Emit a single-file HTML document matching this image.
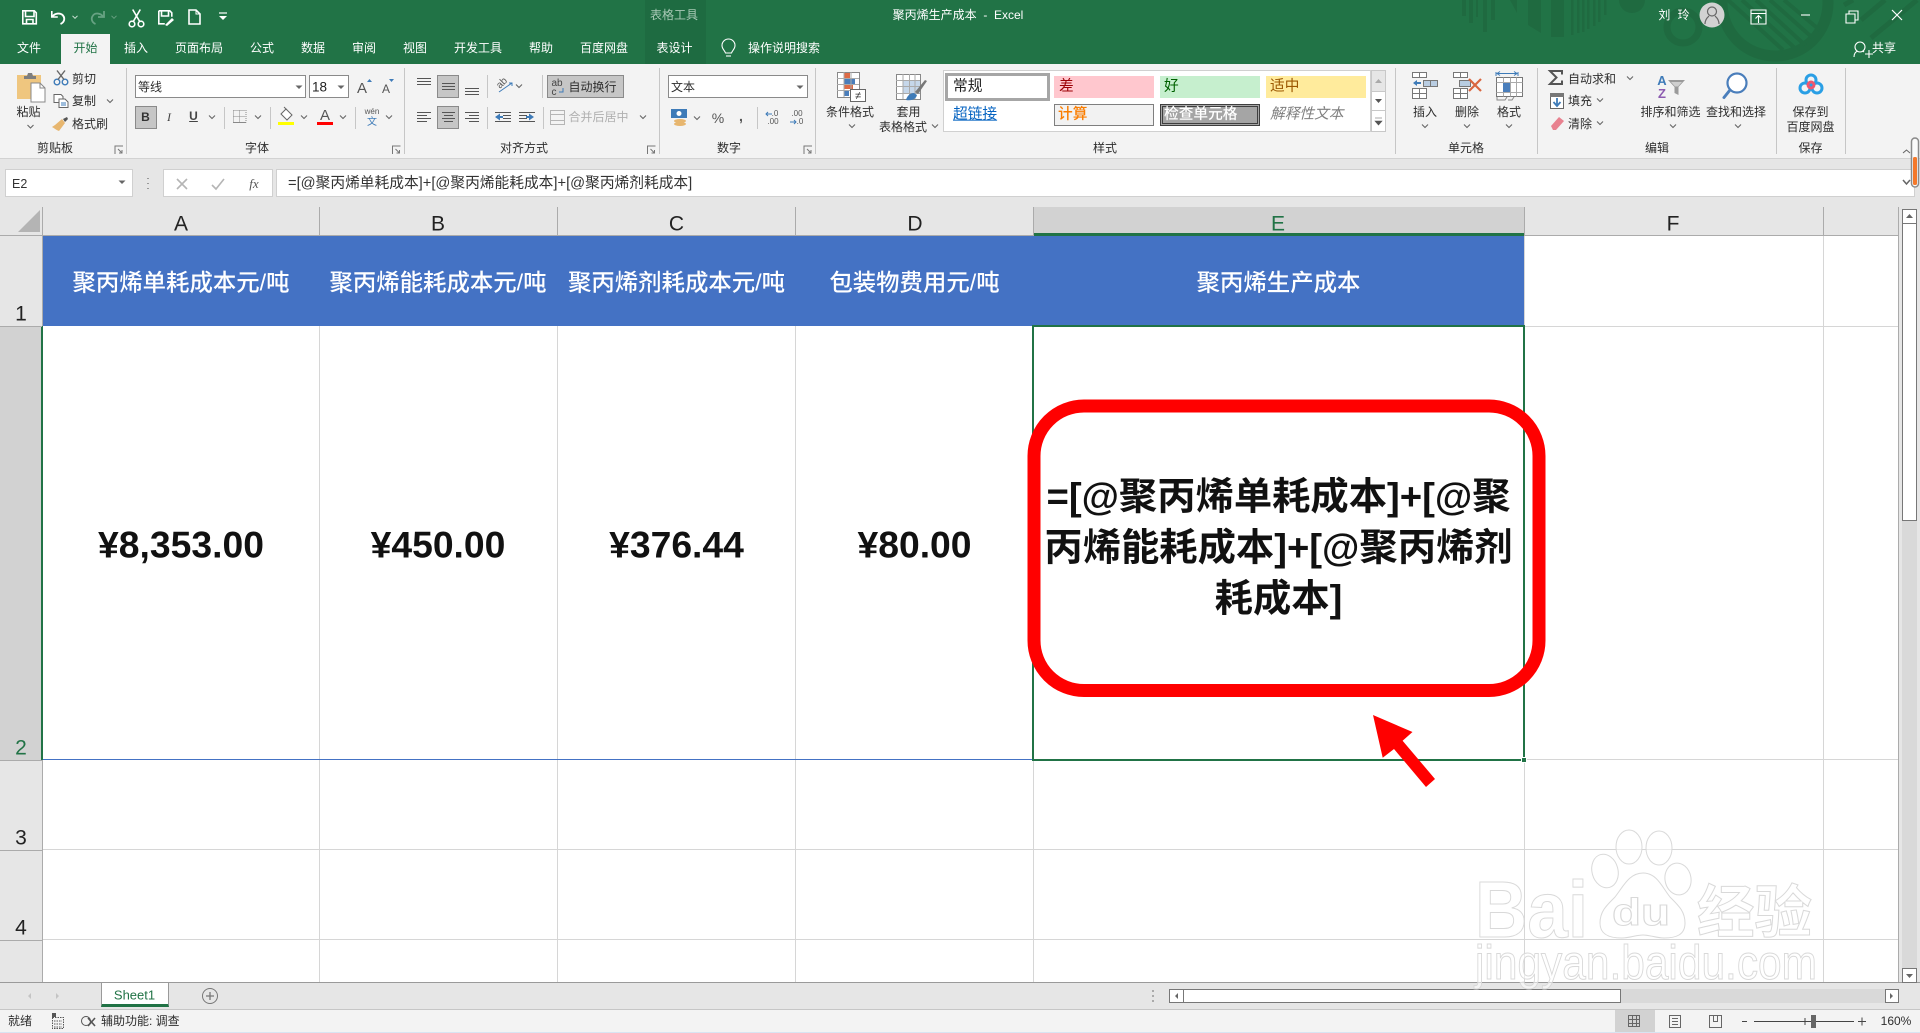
<!DOCTYPE html>
<html lang="zh"><head><meta charset="utf-8"><title>聚丙烯生产成本 - Excel</title>
<style>
html,body{margin:0;padding:0;width:1920px;height:1033px;overflow:hidden;background:#fff}
body{position:relative;font-family:"Liberation Sans","Noto Sans CJK SC",sans-serif;color:#2e2e2e}
.b{position:absolute;box-sizing:border-box}
.c,.l{position:absolute;white-space:nowrap;line-height:1}
.c{transform:translate(-50%,-50%)}
.l{transform:translateY(-50%)}
.r{font-size:12px}
.w{color:#fff;font-size:12px}
.h{font-size:21px;color:#222}
.th{font-size:23.4px;color:#fff;font-weight:500;top:283px}
.v{font-size:37.3px;font-weight:700;color:#111;top:545px}
.g{font-size:14.7px}
svg{position:absolute;left:0;top:0}
</style></head><body>

<!-- title bar + tabs -->
<div class="b" style="left:0;top:0;width:1920px;height:64px;background:#217346"></div>
<div class="b" style="left:645px;top:0;width:61px;height:64px;background:#1e6b41"></div>
<!-- title pattern -->
<svg width="1920" height="64" viewBox="0 0 1920 64">
<defs><clipPath id="bigc"><circle cx="1775" cy="3" r="52"/></clipPath></defs>
<g fill="#1f6a40">
<path d="M1462 0h4v16h-4zM1469 0h4v23h-4zM1476 0h2v17h-2zM1483 0h4v32h-4zM1491 0h4v20h-4z"/>
<path d="M1510 0h7v13zM1528 0h13v33l-13-8zM1551 0h13v37h-13z"/>
<path d="M1571 0h2.500v35h-2.500zM1577 0h2.500v33h-2.500zM1582 0h2.500v32h-2.500zM1587 0h2.500v29h-2.500zM1593 0h2.500v26h-2.500zM1598 0h2.500v22h-2.500zM1604 0h2.500v15h-2.500z"/>
<circle cx="1632" cy="0" r="13"/>
</g>
<g fill="none" stroke="#1f6a40">
<circle cx="1683" cy="27" r="16" stroke-width="7"/>
<circle cx="1775" cy="3" r="53" stroke-width="11"/>
<g clip-path="url(#bigc)" stroke-width="4">
<path d="M1728 0l55 50M1742 0l55 50M1756 0l50 46M1770 0l45 40M1784 0l38 32"/>
</g>
<path d="M1844 5l9-5M1861 20l24-20M1871 38l46-38" stroke-width="5"/>
</g>
</svg>
<div class="b" style="left:61px;top:34px;width:49px;height:30px;background:#f3f3f3"></div>
<!-- ribbon -->
<div class="b" style="left:0;top:64px;width:1920px;height:95px;background:#f3f3f3;border-bottom:1px solid #d2d2d2"></div>
<!-- formula area -->
<div class="b" style="left:0;top:159px;width:1920px;height:48px;background:#e6e6e6"></div>
<div class="b" style="left:5px;top:169px;width:128px;height:28px;background:#fff;border:1px solid #d0d0d0"></div>
<div class="b" style="left:163px;top:169px;width:110px;height:28px;background:#fff;border:1px solid #d0d0d0"></div>
<div class="b" style="left:276px;top:169px;width:1639px;height:28px;background:#fff;border:1px solid #d0d0d0"></div>

<!-- grid headers -->
<div class="b" style="left:0;top:207px;width:1899px;height:29px;background:#e6e6e6;border-bottom:1px solid #ababab"></div>
<div class="b" style="left:1033px;top:207px;width:491px;height:29px;background:#d2d2d2;border-bottom:3px solid #217346"></div>
<div class="b" style="left:0;top:236px;width:43px;height:747px;background:#e6e6e6;border-right:1px solid #ababab"></div>
<div class="b" style="left:0;top:326px;width:43px;height:434px;background:#d2d2d2;border-right:2px solid #217346"></div>

<!-- grid lines -->
<div class="b" style="left:43px;top:236px;width:1855px;height:747px;background:#fff"></div>
<svg width="1920" height="1033" viewBox="0 0 1920 1033">
<g stroke="#d6d6d6" stroke-width="1" fill="none" shape-rendering="crispEdges">
<path d="M319.5 326V983M557.5 326V983M795.5 326V983M1033.5 326V983M1524.5 236V983M1823.5 236V983"/>
<path d="M1524 326.5H1898M43 849.5H1898M43 939.5H1898M1524 759.5H1898"/>
</g>
<g stroke="#ababab" stroke-width="1" fill="none" shape-rendering="crispEdges">
<path d="M42.5 207V236M319.5 207V236M557.5 207V236M795.5 207V236M1033.5 207V236M1524.5 207V236M1823.5 207V236M0 326.5H42M0 760.5H42M0 850.5H42M0 940.5H42M1898.5 207V983"/>
</g>
<path d="M40 210V232H18z" fill="#b4b4b4"/>
</svg>
<div class="b" style="left:43px;top:236px;width:1481px;height:90px;background:#4472c4"></div>
<div class="b" style="left:43px;top:759px;width:990px;height:1px;background:#4472c4"></div>

<div class="c h" style="left:181px;top:224px">A</div>
<div class="c h" style="left:438px;top:224px">B</div>
<div class="c h" style="left:676.500px;top:224px">C</div>
<div class="c h" style="left:915px;top:224px">D</div>
<div class="c h" style="left:1278px;top:224px;color:#217346">E</div>
<div class="c h" style="left:1673px;top:224px">F</div>
<div class="c h" style="left:21px;top:314px">1</div>
<div class="c h" style="left:21px;top:748px;color:#217346">2</div>
<div class="c h" style="left:21px;top:838px">3</div>
<div class="c h" style="left:21px;top:928px">4</div>

<div class="c th" style="left:181px">聚丙烯单耗成本元/吨</div>
<div class="c th" style="left:438px">聚丙烯能耗成本元/吨</div>
<div class="c th" style="left:676.5px">聚丙烯剂耗成本元/吨</div>
<div class="c th" style="left:914.5px">包装物费用元/吨</div>
<div class="c th" style="left:1278.5px">聚丙烯生产成本</div>

<div class="c v" style="left:181px">¥8,353.00</div>
<div class="c v" style="left:438px">¥450.00</div>
<div class="c v" style="left:676.5px">¥376.44</div>
<div class="c v" style="left:914.5px">¥80.00</div>
<div class="c" style="left:1278.5px;top:547.500px;font-size:38.3px;font-weight:700;color:#111;text-align:center;line-height:51px">=[@聚丙烯单耗成本]+[@聚<br>丙烯能耗成本]+[@聚丙烯剂<br>耗成本]</div>

<!-- selection -->
<div class="b" style="left:1032px;top:325px;width:493px;height:436px;border:2px solid #217346"></div>
<div class="b" style="left:1521px;top:757px;width:6px;height:6px;background:#217346;border:1px solid #fff"></div>

<!-- sheet bar -->
<div class="b" style="left:0;top:982px;width:1920px;height:28px;background:#e6e6e6;border-top:1px solid #9a9a9a;border-bottom:1px solid #c6c6c6"></div>
<div class="b" style="left:101px;top:982px;width:68px;height:25px;background:#fff;border:1px solid #9a9a9a;border-top:1px solid #9a9a9a;border-bottom:3px solid #217346"></div>
<div class="c" style="left:134.5px;top:995px;font-size:13px;color:#217346">Sheet1</div>
<!-- status bar -->
<div class="b" style="left:0;top:1010px;width:1920px;height:23px;background:#f3f3f3;border-bottom:1px solid #d8e4f2"></div>
<div class="b" style="left:1615px;top:1010px;width:40px;height:22px;background:#d2d2d2"></div>
<div class="l r" style="left:8px;top:1021px;font-size:12px">就绪</div>
<div class="l r" style="left:101px;top:1021px;font-size:12px">辅助功能: 调查</div>
<div class="c r" style="left:1896px;top:1021px;font-size:12px">160%</div>

<!-- horizontal scroll -->
<div class="b" style="left:1169px;top:989px;width:729px;height:14px;background:#d9d9d9"></div>
<div class="b" style="left:1169px;top:989px;width:15px;height:14px;background:#fff;border:1px solid #777"></div>
<div class="b" style="left:1183px;top:989px;width:438px;height:14px;background:#fff;border:1px solid #777"></div>
<div class="b" style="left:1885px;top:989px;width:14px;height:14px;background:#fff;border:1px solid #777"></div>
<!-- vertical scroll -->
<div class="b" style="left:1899px;top:207px;width:21px;height:775px;background:#e6e6e6"></div>
<div class="b" style="left:1902px;top:209px;width:15px;height:773px;background:#d9d9d9"></div>
<div class="b" style="left:1902px;top:209px;width:15px;height:15px;background:#fff;border:1px solid #777"></div>
<div class="b" style="left:1902px;top:223px;width:15px;height:298px;background:#fff;border:1px solid #777"></div>
<div class="b" style="left:1902px;top:968px;width:15px;height:15px;background:#fff;border:1px solid #777"></div>

<!-- title text -->
<div class="c w" style="left:674px;top:15px;color:#a9c9b6">表格工具</div>
<div class="c w" style="left:958px;top:15px">聚丙烯生产成本&nbsp; -&nbsp; Excel</div>
<div class="c w" style="left:1675px;top:15px;letter-spacing:2px">刘 玲</div>
<div class="c w" style="left:29px;top:48px">文件</div>
<div class="c" style="left:85.5px;top:48px;font-size:12px;color:#217346">开始</div>
<div class="c w" style="left:136px;top:48px">插入</div>
<div class="c w" style="left:199px;top:48px">页面布局</div>
<div class="c w" style="left:262px;top:48px">公式</div>
<div class="c w" style="left:313px;top:48px">数据</div>
<div class="c w" style="left:364px;top:48px">审阅</div>
<div class="c w" style="left:415px;top:48px">视图</div>
<div class="c w" style="left:478px;top:48px">开发工具</div>
<div class="c w" style="left:541px;top:48px">帮助</div>
<div class="c w" style="left:604px;top:48px">百度网盘</div>
<div class="c w" style="left:674.5px;top:48px">表设计</div>
<div class="c w" style="left:784px;top:48px">操作说明搜索</div>
<div class="c w" style="left:1884px;top:48px">共享</div>

<!-- ribbon boxes -->
<div class="b" style="left:135px;top:75px;width:171px;height:23px;background:#fff;border:1px solid #8a8a8a"></div>
<div class="b" style="left:309px;top:75px;width:40px;height:23px;background:#fff;border:1px solid #8a8a8a"></div>
<div class="b" style="left:135px;top:106px;width:22px;height:23px;background:#c6c6c6;border:1px solid #8a8a8a"></div>
<div class="b" style="left:437px;top:75px;width:22px;height:23px;background:#c6c6c6;border:1px solid #8a8a8a"></div>
<div class="b" style="left:437px;top:106px;width:22px;height:23px;background:#c6c6c6;border:1px solid #8a8a8a"></div>
<div class="b" style="left:547px;top:75px;width:77px;height:23px;background:#c6c6c6;border:1px solid #8a8a8a"></div>
<div class="b" style="left:668px;top:75px;width:140px;height:23px;background:#fff;border:1px solid #8a8a8a"></div>

<div class="l r" style="left:72px;top:79px">剪切</div>
<div class="l r" style="left:72px;top:101px">复制</div>
<div class="l r" style="left:72px;top:124px">格式刷</div>
<div class="c r" style="left:28.5px;top:112px">粘贴</div>
<div class="l r" style="left:138px;top:87px">等线</div>
<div class="l" style="left:312px;top:87px;color:#222;font-size:13.5px">18</div>
<div class="c" style="left:145.5px;top:117px;font-size:12px;font-weight:700;color:#333">B</div>
<div class="c" style="left:169px;top:117px;font-size:12px;font-style:italic;color:#444;font-family:'Liberation Serif',serif">I</div>
<div class="c" style="left:193.5px;top:116px;font-size:12px;font-weight:700;color:#444;text-decoration:underline">U</div>
<div class="c" style="left:592.5px;top:87px;font-size:12px">自动换行</div>
<div class="c" style="left:598.5px;top:117px;font-size:12px;color:#b0b0b0">合并后居中</div>
<div class="l r" style="left:671px;top:87px">文本</div>
<div class="c" style="left:718px;top:118px;font-size:14px;color:#555">%</div>
<div class="c" style="left:741px;top:116px;font-size:14px;font-weight:700;color:#555">,</div>
<div class="c" style="left:850px;top:112px;font-size:12px">条件格式</div>
<div class="c r" style="left:908.5px;top:112px">套用</div>
<div class="c r" style="left:903px;top:127px">表格格式</div>

<!-- gallery -->
<div class="b" style="left:943px;top:70px;width:428px;height:62px;background:#fff;border:1px solid #d0d0d0"></div>
<div class="b" style="left:945px;top:73px;width:105px;height:28px;background:#fff;border:3px solid #a6a6a6"></div>
<div class="b" style="left:1054px;top:76px;width:100px;height:22px;background:#ffc7ce"></div>
<div class="b" style="left:1160px;top:76px;width:100px;height:22px;background:#c6efce"></div>
<div class="b" style="left:1266px;top:76px;width:100px;height:22px;background:#ffeb9c"></div>
<div class="b" style="left:1054px;top:104px;width:100px;height:22px;background:#f2f2f2;border:1px solid #7f7f7f"></div>
<div class="b" style="left:1160px;top:104px;width:100px;height:22px;background:#a5a5a5;border:3px double #3f3f3f"></div>
<div class="l g" style="left:953px;top:87px;color:#222">常规</div>
<div class="l g" style="left:1059px;top:87px;color:#9c0006">差</div>
<div class="l g" style="left:1164px;top:87px;color:#006100">好</div>
<div class="l g" style="left:1270px;top:87px;color:#9c5700">适中</div>
<div class="l g" style="left:953px;top:115px;color:#0563c1;text-decoration:underline">超链接</div>
<div class="l g" style="left:1058px;top:115px;font-weight:500;color:#fa7d00">计算</div>
<div class="l g" style="left:1164px;top:115px;font-weight:500;color:#fff">检查单元格</div>
<div class="l g" style="left:1270px;top:115px;font-style:italic;color:#7f7f7f">解释性文本</div>
<div class="b" style="left:1371px;top:70px;width:15px;height:62px;background:#fff;border:1px solid #c8c8c8"></div>
<div class="b" style="left:1371px;top:70px;width:15px;height:22px;background:#e6e6e6;border:1px solid #c8c8c8"></div>
<div class="b" style="left:1371px;top:110px;width:15px;height:22px;background:#fff;border:1px solid #c8c8c8"></div>

<div class="c r" style="left:1425px;top:112px">插入</div>
<div class="c r" style="left:1467px;top:112px">删除</div>
<div class="c r" style="left:1509px;top:112px">格式</div>
<div class="l r" style="left:1568px;top:79px">自动求和</div>
<div class="l r" style="left:1568px;top:101px">填充</div>
<div class="l r" style="left:1568px;top:124px">清除</div>
<div class="c r" style="left:1670.5px;top:112px">排序和筛选</div>
<div class="c r" style="left:1736px;top:112px">查找和选择</div>
<div class="c r" style="left:1810.5px;top:112px">保存到</div>
<div class="c r" style="left:1810.5px;top:127px">百度网盘</div>

<div class="c r" style="left:55px;top:148px">剪贴板</div>
<div class="c r" style="left:257px;top:148px">字体</div>
<div class="c r" style="left:524px;top:148px">对齐方式</div>
<div class="c r" style="left:729px;top:148px">数字</div>
<div class="c r" style="left:1105px;top:148px">样式</div>
<div class="c r" style="left:1466px;top:148px">单元格</div>
<div class="c r" style="left:1657px;top:148px">编辑</div>
<div class="c r" style="left:1810.5px;top:148px">保存</div>

<div class="l r" style="left:12px;top:184px;font-size:12.5px;color:#333">E2</div>
<div class="l" style="left:288px;top:184px;font-size:14.73px;color:#333">=[@聚丙烯单耗成本]+[@聚丙烯能耗成本]+[@聚丙烯剂耗成本]</div>

<!-- icons -->
<svg width="1920" height="1033" viewBox="0 0 1920 1033">
<defs>
<path id="ch" d="M-3-1.5 0 1.5 3-1.5" fill="none" stroke="#666" stroke-width="1.1"/>
<path id="chw" d="M-2.5-1.2 0 1.3 2.5-1.2" fill="none" stroke="#cfe3d7" stroke-width="1"/>
<path id="tr" d="M-3.5-1.5h7L0 2z" fill="#666"/>
<path id="la" d="M-4 4v-8h8M-1-1l4 4M3 0v3h-3" fill="none" stroke="#777" stroke-width="1"/>
</defs>

<!-- QAT -->
<g fill="none" stroke="#fff" stroke-width="1.6">
<path d="M22.800 10.800h11.500l2 2v11H22.800z"/><path d="M25.500 11v5.500h8.500V11M26.500 24v-4.500h6.500V24"/>
<path d="M51.800 11v6h6"/><path d="M52.500 16.500c2.500-3.500 8-4 10.500-1 2.500 3.200 1 7-2.500 8.500" stroke-width="1.900"/>
<circle cx="132" cy="24" r="2.800"/><circle cx="141" cy="24" r="2.800"/><path d="M133.300 21.500l7-12M139.700 21.500l-7-12"/>
<path d="M158.800 10.800h11l2 2v4M158.800 10.800v13h6M161.500 11v5h7v-5"/><path d="M165 25l7-7 2 2-7 6z" fill="#fff" stroke="none"/>
<path d="M189 10h7l4 4v10h-11z"/><path d="M196 10v4h4" stroke-width="1"/>
<path d="M219 13h8" stroke-width="1.200"/>
</g>
<path d="M219 16h8l-4 4z" fill="#fff"/>
<g fill="none" stroke="#67a283" stroke-width="1.800"><path d="M104 11v6h-6"/><path d="M103 16.500c-2.500-3.500-8-4-10-1-2.500 3.200-1 7 2.500 8.500"/></g>
<use href="#chw" x="75" y="17"/><use href="#chw" x="114" y="17" opacity=".4"/>
<!-- bulb, avatar, window buttons -->
<g fill="none" stroke="#fff" stroke-width="1.100">
<path d="M725.500 53c-1-3-3.500-4-3.500-7.500a6.500 6.500 0 0 1 13 0c0 3.500-2.500 4.500-3.500 7.500z"/><path d="M726 56h5"/>
<path d="M1751 10h15v14h-15zM1751 13.500h15M1758.500 23v-7M1755.500 18.500l3-3 3 3"/>
<path d="M1801 15h9"/>
<path d="M1846 14h9v9h-9zM1849 14v-3h9v9h-3"/>
<path d="M1892 10l10 10M1902 10l-10 10" stroke-width="1.200"/>
<circle cx="1860" cy="47" r="5"/><path d="M1854 57c0-4 2-5 3.500-6M1863 52l1-1"/><path d="M1865 54h8M1869 50v8"/>
</g>
<circle cx="1712" cy="15" r="12.500" fill="#d2d2d2"/>
<g fill="none" stroke="#666" stroke-width="1.200"><circle cx="1712" cy="11.500" r="4.500"/><path d="M1705 24c0-5 3-7 4-8M1719 24c0-5-3-7-4-8"/></g>

<!-- separators -->
<g stroke="#c6c6c6" stroke-width="1" shape-rendering="crispEdges">
<path d="M126.500 68V154M404.500 68V154M659.500 68V154M815.500 68V154M1395.500 68V154M1537.500 68V154M1776.500 68V154M1845.500 68V154"/>
<path d="M224.500 107V129M270.500 107V129M355.500 107V129M487.500 75V98M487.500 107V129M542.500 75V98M543.500 107V129M757.500 107V129"/>
</g>
<use href="#la" x="119" y="150"/><use href="#la" x="396.500" y="150"/><use href="#la" x="651.500" y="150"/><use href="#la" x="808" y="150"/>

<!-- clipboard -->
<path d="M17 75h24v24H17z" fill="#efc67f"/><path d="M24 76h3l1-3h4l1 3h3v3H24z" fill="#7e7e7e"/>
<path d="M31 83h9l5 5v14H31z" fill="#fff" stroke="#888"/><path d="M40 83v5h5" fill="none" stroke="#888"/>
<use href="#ch" x="30.500" y="126.500"/>
<g fill="none" stroke-width="1.400"><circle cx="57" cy="82" r="2.800" stroke="#3e7bb8"/><circle cx="65" cy="82" r="2.800" stroke="#3e7bb8"/><path d="M58 79.500l7-9M64 79.500l-7-9" stroke="#666"/></g>
<g fill="#fff" stroke="#666"><path d="M54 94.500h7l2 2v6h-9z"/><path d="M59 99h6l3 3v5.500h-9z"/></g><path d="M61 103h5M61 105h5" stroke="#3e7bb8"/>
<path d="M63 119l4-2 1 2-3 3z" fill="#555"/><path d="M55 125l7-6 3 4-6 8c-3-1-5-3-7-4z" fill="#e7b66f"/>
<use href="#ch" x="110" y="101"/>

<!-- font -->
<use href="#tr" x="299" y="87"/><use href="#tr" x="341" y="87"/>
<text x="362" y="93" font-size="15" fill="#555" text-anchor="middle" font-family="Liberation Sans">A</text><path d="M367 82l2.500-3 2.500 3z" fill="#3e7bb8"/>
<text x="386" y="93" font-size="12" fill="#555" text-anchor="middle" font-family="Liberation Sans">A</text><path d="M389 79h5l-2.500 3z" fill="#3e7bb8"/>
<use href="#ch" x="212" y="117"/><use href="#ch" x="258" y="117"/><use href="#ch" x="304" y="117"/><use href="#ch" x="343" y="117"/><use href="#ch" x="389" y="117"/>
<g fill="none" stroke="#888"><path d="M233.500 110.500h12.500v12M233.500 110.500v12M239.500 110.500v12M233.500 116.500h12.500" stroke-dasharray="1 1"/><path d="M233 122.500h13"/></g>
<path d="M281 114l5-5 6 6-5 5z" fill="#fff" stroke="#666"/><path d="M284 107l3 3" stroke="#666"/>
<rect x="278" y="122" width="16" height="3" fill="#ff0"/>
<text x="325" y="120" font-size="15" fill="#555" text-anchor="middle" font-family="Liberation Sans">A</text>
<rect x="317" y="122" width="16" height="3" fill="#f00"/>
<text x="372" y="114" font-size="8" fill="#555" text-anchor="middle" font-family="Liberation Sans">wén</text>
<text x="372" y="125" font-size="10" fill="#3e7bb8" text-anchor="middle" font-family="Liberation Sans,Noto Sans CJK SC">文</text>

<!-- alignment -->
<g stroke="#555" stroke-width="1" shape-rendering="crispEdges">
<path d="M417 78.500h14M417 81.500h14M417 84.500h14M442 83.500h13M442 86.500h13M442 89.500h13M465 88.500h14M465 91.500h14M465 94.500h14"/>
<path d="M417 112.500h14M417 115.500h10M417 118.500h14M417 121.500h10M442 112.500h13M444 115.500h9M442 118.500h13M444 121.500h9M465 112.500h14M469 115.500h10M465 118.500h14M469 121.500h10"/>
<path d="M495 112.500h16M503 115.500h8M503 118.500h8M495 121.500h16M519 112.500h16M519 115.500h8M519 118.500h8M519 121.500h16"/>
</g>
<path d="M495 117l5-3.500v2.500h3v2h-3v2.500zM534 117l-5-3.500v2.500h-3v2h3v2.500z" fill="#3e7bb8"/>
<text transform="translate(500 89) rotate(-45)" font-size="10" fill="#555" font-family="Liberation Sans">ab</text>
<path d="M499 92l13-9M509 83h3v3" fill="none" stroke="#3e7bb8"/>
<use href="#ch" x="519" y="86"/><use href="#ch" x="643" y="117"/>
<text x="557" y="86" font-size="10" fill="#444" text-anchor="middle" font-family="Liberation Sans">ab</text>
<text x="554" y="95" font-size="10" fill="#444" text-anchor="middle" font-family="Liberation Sans">c</text>
<path d="M563 88v4h-4" fill="none" stroke="#3e7bb8"/>
<g fill="none" stroke="#b5b5b5"><path d="M550.500 110.500h14v14h-14zM550.500 114.500h14M550.500 120.500h14"/></g>

<!-- number -->
<use href="#tr" x="800" y="87"/>
<rect x="671" y="109" width="16" height="9" fill="#3e7bb8"/><circle cx="679" cy="113.500" r="2.500" fill="#fff"/>
<ellipse cx="680" cy="121" rx="6" ry="2" fill="#e7b66f"/><ellipse cx="680" cy="124" rx="6" ry="2" fill="#e7b66f"/>
<use href="#ch" x="697" y="118"/>
<g font-size="8" fill="#555" font-family="Liberation Sans" text-anchor="middle">
<text x="775" y="116">.0</text><text x="773" y="124">.00</text><text x="797" y="116">.00</text><text x="800" y="124">.0</text></g>
<path d="M766 114h6M768 112l-2 2 2 2M790 122h6M794 120l2 2-2 2" fill="none" stroke="#3e7bb8"/>

<!-- cond format / table format -->
<g fill="#fff" stroke="#888" shape-rendering="crispEdges"><rect x="837.500" y="72.500" width="22" height="25"/></g>
<path d="M844 73h6v5h-6zM844 85h9v4h-9z" fill="#dd6b46"/><path d="M844 79h11v5h-11zM844 91h5v5h-5z" fill="#4a7ebb"/>
<path d="M844 72v25M851 72v25M837 78.500h22M837 84.500h22M837 90.500h22" stroke="#aaa" fill="none"/>
<rect x="850.500" y="89.500" width="15" height="12" fill="#fff" stroke="#666"/>
<text x="858" y="99" font-size="11" fill="#333" text-anchor="middle" font-family="Liberation Sans">≠</text>
<use href="#ch" x="852" y="126"/>
<rect x="896.500" y="74.500" width="24" height="25" fill="#fff" stroke="#888"/><rect x="903" y="80" width="17" height="14" fill="#c6d7ea"/>
<path d="M896 80.500h24M896 86.500h24M896 93.500h24M903 74v25M909.500 74v25M915 74v25" stroke="#aaa" fill="none"/>
<path d="M925 80l-10 12 3 2 9-13z" fill="#777"/><path d="M906 100c1-4 4-7 8-7l3 2c-1 4-5 6-11 5z" fill="#3e7bb8"/>
<use href="#ch" x="935" y="126"/>

<!-- gallery scroll -->
<path d="M1375 83l3.500-4 3.500 4z" fill="#aaa"/><path d="M1375 99l3.500 4 3.500-4z" fill="#555"/>
<path d="M1375 118h7M1375 121l3.500 4 3.500-4z" fill="#555" stroke="#555" stroke-width=".6"/>

<!-- cells -->
<g fill="#fff" stroke="#777" shape-rendering="crispEdges">
<rect x="1412.500" y="72.500" width="14" height="5"/><path d="M1419.500 72.500v5" fill="none"/>
<rect x="1412.500" y="88.500" width="14" height="10"/><path d="M1419.500 88.500v10M1412.500 93.500h14" fill="none"/>
<rect x="1423.500" y="80.500" width="14" height="6" fill="#b9cde2"/><path d="M1430.500 80.500v6" fill="none"/>
<rect x="1453.500" y="72.500" width="14" height="5"/><path d="M1460.500 72.500v5" fill="none"/>
<rect x="1453.500" y="88.500" width="14" height="10"/><path d="M1460.500 88.500v10M1453.500 93.500h14" fill="none"/>
<rect x="1459.500" y="80.500" width="11" height="6" fill="#b9cde2"/>
<rect x="1496.500" y="77.500" width="26" height="19"/><path d="M1503.500 77.500v19M1510.500 77.500v19M1516.500 77.500v19M1496.500 82.500h26M1496.500 92.500h26" fill="none" stroke="#aaa"/>
</g>
<path d="M1413 83l4-3v2h4v2h-4v2z" fill="#3e7bb8"/>
<path d="M1469 79l12 12M1481 79l-12 12" stroke="#d9663f" stroke-width="2.200"/>
<rect x="1503" y="83" width="7" height="9" fill="#4a7ebb"/>
<path d="M1496 72v4M1518 72v4M1497 73.500h20M1500 71.500l-3 2 3 2M1514 71.500l3 2-3 2" fill="none" stroke="#3e7bb8"/>
<path d="M1497 97v3h8l2-3M1508 100h4l2-3" fill="none" stroke="#888"/>
<use href="#ch" x="1425" y="126"/><use href="#ch" x="1467" y="126"/><use href="#ch" x="1509" y="126"/>

<!-- editing -->
<path d="M1562 74.500v-3.500h-12l6.500 6.500-6.500 6.500h12v-3.500" fill="none" stroke="#555" stroke-width="2"/>
<use href="#ch" x="1630" y="78"/><use href="#ch" x="1600" y="100"/><use href="#ch" x="1600" y="123"/>
<rect x="1550.500" y="93.500" width="13" height="15" fill="#fff" stroke="#666"/><rect x="1550" y="93" width="14" height="4" fill="#777"/>
<path d="M1557 98v7M1553.500 102l3.500 4 3.500-4" fill="none" stroke="#3e7bb8" stroke-width="1.800"/>
<path d="M1551 126l8-9 5 4-8 9h-3z" fill="#e8818f"/>
<text x="1662" y="85" font-size="13" font-weight="700" fill="#3e7bb8" text-anchor="middle" font-family="Liberation Sans">A</text>
<text x="1662" y="98" font-size="13" font-weight="700" fill="#8c5bb0" text-anchor="middle" font-family="Liberation Sans">Z</text>
<path d="M1668 80h17l-6.500 7v8l-4-2v-6z" fill="#9a9a9a"/><path d="M1671 82h11l-4 4.500h-3z" fill="#cfcfcf"/>
<use href="#ch" x="1673" y="126"/><use href="#ch" x="1738" y="126"/>
<circle cx="1737" cy="83" r="9.500" fill="#fff" stroke="#4a7ebb" stroke-width="2.200"/>
<path d="M1730 90l-6 7.500" stroke="#4a7ebb" stroke-width="3" stroke-linecap="round"/>
<g fill="none" stroke-width="3"><circle cx="1805" cy="88" r="5" stroke="#2a9fe5"/><circle cx="1817" cy="88" r="5" stroke="#2a9fe5"/><circle cx="1811" cy="80" r="5" stroke="#2a9fe5"/><circle cx="1811" cy="85" r="3" stroke="#f0566e"/></g>

<!-- top right thing -->
<path d="M1903 153l3.500-3 3.500 3" fill="none" stroke="#666"/>
<path d="M1903 180l3.500 4 3.500-4" fill="none" stroke="#666" stroke-width="1.500"/>
<rect x="1911.500" y="138" width="7" height="49" rx="3.500" fill="#fafafa" stroke="#8a8a8a" stroke-width="1.500"/>
<rect x="1913" y="157" width="4" height="28" rx="1.500" fill="#f4782a"/>

<!-- formula bar -->
<use href="#tr" x="122" y="182"/>
<path d="M148 178v1M148 183v1M148 188v1" stroke="#999" stroke-width="2"/>
<path d="M177 179l10 10M187 179l-10 10" stroke="#b5b5b5" stroke-width="1.600"/>
<path d="M212 185l4 4 8-10" fill="none" stroke="#b5b5b5" stroke-width="1.600"/>
<text x="254" y="188" font-size="13" font-style="italic" fill="#555" text-anchor="middle" font-family="Liberation Serif">fx</text>

<!-- scroll arrows -->
<path d="M1906 218l3.500-4 3.500 4z" fill="#666"/><path d="M1906 974l3.500 4 3.500-4z" fill="#666"/>
<path d="M1178 993v6l-3-3zM1890 993v6l3-3z" fill="#666"/>
<path d="M1153 990v2M1153 995v2M1153 1000v2" stroke="#aaa" stroke-width="2"/>
<path d="M31 993v6l-3-3zM56 993v6l3-3z" fill="#c4c4c4"/>
<circle cx="210" cy="996" r="7.500" fill="none" stroke="#777"/><path d="M206 996h8M210 992v8" stroke="#777" stroke-width="1.300"/>

<!-- status icons -->
<g fill="none" stroke="#555">
<path d="M52.500 1017.500h11v11h-11zM54 1021h8M54 1024h8M54 1027h8" stroke-dasharray="1.500 1"/>
<circle cx="86" cy="1021" r="4.500"/>
</g>
<rect x="52" y="1013" width="4" height="4" fill="#555"/>
<path d="M88 1018l7 8M95 1018l-7 8" stroke="#555" stroke-width="1.600"/>
<g fill="none" stroke="#666" shape-rendering="crispEdges">
<path d="M1628.500 1015.500h11v11h-11zM1632.500 1015.500v11M1636.500 1015.500v11M1628.500 1019.500h11M1628.500 1023.500h11"/>
<path d="M1669.500 1015.500h11v12h-11zM1672 1018.500h6M1672 1021.500h6M1672 1024.500h6"/>
<path d="M1709.500 1015.500h12v12h-12zM1713.500 1015.500v6h4v-6"/>
</g>
<path d="M1742 1021.500h5M1754 1021.500h100M1858 1021.500h8M1862 1017.500v8M1805 1018v7" stroke="#444" shape-rendering="crispEdges"/>
<rect x="1811" y="1015" width="5" height="13" fill="#666"/>

<!-- annotation -->
<rect x="1034" y="406" width="505" height="284.500" rx="50" ry="50" fill="none" stroke="#f00" stroke-width="13"/>
<path d="M1373 715L1412.500 732 1402.600 740.700 1435 779 1426 787 1394 749 1382.700 757.700z" fill="#f00"/>

<!-- watermark -->
<g fill="#fff" fill-opacity=".55" stroke="#d9d9d9" stroke-width="1">
<ellipse cx="1629" cy="847" rx="13" ry="17"/><ellipse cx="1659" cy="848" rx="13" ry="17"/>
<ellipse cx="1605" cy="871" rx="13" ry="17" transform="rotate(-15 1605 871)"/><ellipse cx="1678" cy="879" rx="13" ry="16" transform="rotate(-10 1678 879)"/>
<path d="M1643 873c-14 0-20 14-28 24-8 8-15 14-15 26 0 12 10 15 22 15 8 0 14-3 21-3 7 0 13 3 21 3 12 0 21-3 21-15 0-12-7-18-15-26-8-10-13-24-27-24z"/>
<text x="1475" y="937" font-size="80" font-weight="700" textLength="113" lengthAdjust="spacingAndGlyphs" font-family="Liberation Sans">Bai</text>
<text x="1612" y="925" font-size="38" font-weight="700" textLength="58" lengthAdjust="spacingAndGlyphs" font-family="Liberation Sans">du</text>
<text x="1697" y="932" font-size="57" font-weight="700" textLength="115" lengthAdjust="spacingAndGlyphs" font-family="Noto Sans CJK SC,sans-serif">经验</text>
<text x="1475" y="979" font-size="48" textLength="342" lengthAdjust="spacingAndGlyphs" font-family="Liberation Sans">jingyan.baidu.com</text>
</g>
</svg>
</body></html>
